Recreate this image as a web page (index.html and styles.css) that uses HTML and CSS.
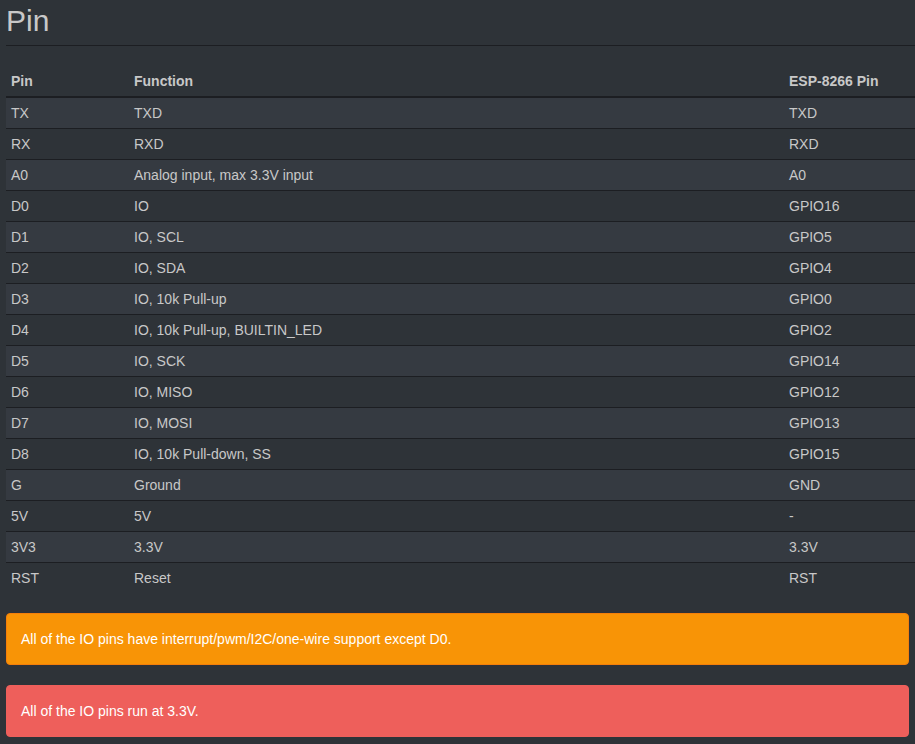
FILE: index.html
```html
<!DOCTYPE html>
<html lang="en">
<head>
  <meta charset="UTF-8" />
  <title>Pin</title>
  <link rel="stylesheet" href="styles.css">
</head>
<body>

<div class="content">
  <h2>Pin</h2>
  <hr />

  <table class="pin-table">
    <thead>
      <tr>
        <th class="col-pin">Pin</th>
        <th>Function</th>
        <th class="col-esp">ESP-8266 Pin</th>
      </tr>
    </thead>
    <tbody>
      <tr><td>TX</td><td>TXD</td><td>TXD</td></tr>
      <tr><td>RX</td><td>RXD</td><td>RXD</td></tr>
      <tr><td>A0</td><td>Analog input, max 3.3V input</td><td>A0</td></tr>
      <tr><td>D0</td><td>IO</td><td>GPIO16</td></tr>
      <tr><td>D1</td><td>IO, SCL</td><td>GPIO5</td></tr>
      <tr><td>D2</td><td>IO, SDA</td><td>GPIO4</td></tr>
      <tr><td>D3</td><td>IO, 10k Pull-up</td><td>GPIO0</td></tr>
      <tr><td>D4</td><td>IO, 10k Pull-up, BUILTIN_LED</td><td>GPIO2</td></tr>
      <tr><td>D5</td><td>IO, SCK</td><td>GPIO14</td></tr>
      <tr><td>D6</td><td>IO, MISO</td><td>GPIO12</td></tr>
      <tr><td>D7</td><td>IO, MOSI</td><td>GPIO13</td></tr>
      <tr><td>D8</td><td>IO, 10k Pull-down, SS</td><td>GPIO15</td></tr>
      <tr><td>G</td><td>Ground</td><td>GND</td></tr>
      <tr><td>5V</td><td>5V</td><td>-</td></tr>
      <tr><td>3V3</td><td>3.3V</td><td>3.3V</td></tr>
      <tr><td>RST</td><td>Reset</td><td>RST</td></tr>
    </tbody>
  </table>

  <div class="alert alert-warning">All of the IO pins have interrupt/pwm/I2C/one-wire support except D0.</div>
  <div class="alert alert-danger">All of the IO pins run at 3.3V.</div>
</div>

</body>
</html>
```

FILE: styles.css
```css
body {
  margin: 0;
  background: #2e3338;
  color: #c8c8c8;
  font-family: "Liberation Sans", Arial, sans-serif;
  font-size: 14px;
  line-height: 20px;
  overflow: hidden;
}

.content {
  padding: 4px 6px 0 6px;
}

h2 {
  margin: 0;
  font-size: 30px;
  font-weight: normal;
  line-height: 33px;
  color: #c8c8c8;
}

hr {
  margin: 8px -6px 20px 0;
  border: 0;
  border-top: 1px solid #1c1e22;
}

.pin-table {
  width: calc(100% + 6px);
  border-collapse: collapse;
  margin-bottom: 20px;
}

.pin-table th,
.pin-table td {
  padding: 5px 5px;
  text-align: left;
  border-top: 1px solid #1c1e22;
}

.pin-table th {
  border-top: none;
  border-bottom: 2px solid #1c1e22;
  font-weight: bold;
}

.col-pin {
  width: 113px;
}

.col-esp {
  width: 121px;
}

.pin-table tbody tr:nth-child(odd) {
  background: #353a41;
}

.alert {
  padding: 15px 14px;
  margin-bottom: 20px;
  border: 1px solid transparent;
  border-radius: 4px;
  color: #ffffff;
}

.alert-warning {
  background: #f89406;
  border-color: #f57f0a;
}

.alert-danger {
  background: #ee5f5b;
  border-color: #ee5f5b;
}
```
